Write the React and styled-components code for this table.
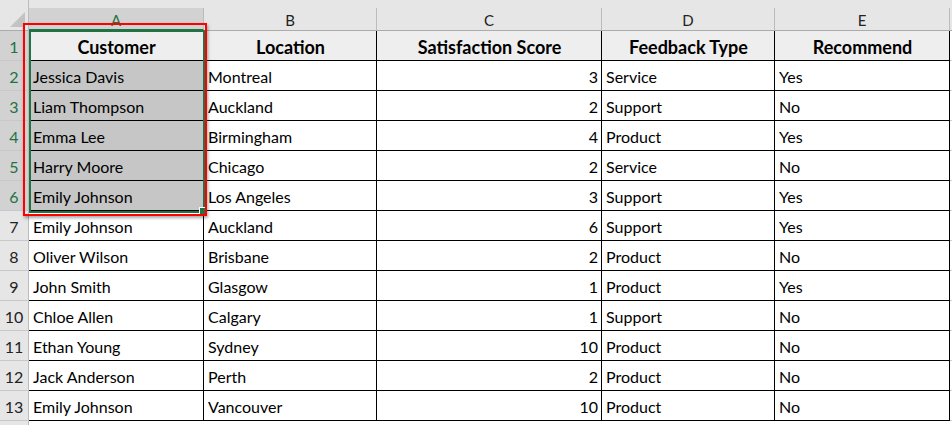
import React from "react"
import styled, { createGlobalStyle } from "styled-components"

const GlobalStyle = createGlobalStyle`
  html, body {
    margin: 0;
    padding: 0;
    background: #ffffff;
  }
  body {
    font-family: Lato, "Liberation Sans", sans-serif;
  }
`

const rows = [
  ["Jessica Davis", "Montreal", 3, "Service", "Yes"],
  ["Liam Thompson", "Auckland", 2, "Support", "No"],
  ["Emma Lee", "Birmingham", 4, "Product", "Yes"],
  ["Harry Moore", "Chicago", 2, "Service", "No"],
  ["Emily Johnson", "Los Angeles", 3, "Support", "Yes"],
  ["Emily Johnson", "Auckland", 6, "Support", "Yes"],
  ["Oliver Wilson", "Brisbane", 2, "Product", "No"],
  ["John Smith", "Glasgow", 1, "Product", "Yes"],
  ["Chloe Allen", "Calgary", 1, "Support", "No"],
  ["Ethan Young", "Sydney", 10, "Product", "No"],
  ["Jack Anderson", "Perth", 2, "Product", "No"],
  ["Emily Johnson", "Vancouver", 10, "Product", "No"],
]

const headers = ["Customer", "Location", "Satisfaction Score", "Feedback Type", "Recommend"]
const letters = ["A", "B", "C", "D", "E"]

const Sheet = styled.div`
  position: relative;
  width: 952px;
  height: 425px;
  overflow: hidden;
  background: #ffffff;
`

const TopStrip = styled.div`
  height: 8px;
  background: #e6e6e6;
`

const Grid = styled.div`
  display: grid;
  grid-template-columns: 29px 175px 173px 225px 173px 175px 2px;
  grid-auto-rows: 30px;
  grid-template-rows: 23px;
`

const Corner = styled.div`
  position: relative;
  background: #e6e6e6;
  border-right: 1px solid #bcbcbc;
  border-bottom: 1px solid #ababab;
  box-sizing: border-box;
  margin-top: -8px;
  height: 31px;
`

const Triangle = styled.div`
  position: absolute;
  right: 3px;
  bottom: 3px;
  width: 0;
  height: 0;
  border-left: 15px solid transparent;
  border-bottom: 15px solid #c3c3c3;
`

const ColHead = styled.div`
  display: flex;
  align-items: center;
  justify-content: center;
  box-sizing: border-box;
  background: ${(p) => (p.$sel ? "#d2d2d2" : "#e6e6e6")};
  color: ${(p) => (p.$sel ? "#217346" : "#222222")};
  border-right: 1px solid #bcbcbc;
  border-bottom: ${(p) => (p.$sel ? "2px solid #217346" : "1px solid #ababab")};
  font-size: 15px;
  padding-top: 2px;
`

const RowHead = styled.div`
  display: flex;
  align-items: center;
  justify-content: center;
  box-sizing: border-box;
  background: ${(p) => (p.$sel ? "#d2d2d2" : "#e6e6e6")};
  color: ${(p) => (p.$sel ? "#217346" : "#222222")};
  border-right: 1px solid #bcbcbc;
  border-bottom: 1px solid #c8c8c8;
  font-size: 16px;
  padding-top: 2px;
`

const Cell = styled.div`
  display: flex;
  align-items: center;
  justify-content: ${(p) => (p.$head ? "center" : p.$num ? "flex-end" : "flex-start")};
  box-sizing: border-box;
  padding: 2px 3px 0 4px;
  background: ${(p) => (p.$head ? "#eeeeee" : p.$sel ? "#c6c6c6" : "#ffffff")};
  border-right: 1px solid #000000;
  border-bottom: 1px solid #000000;
  font-size: ${(p) => (p.$head ? "18px" : "16px")};
  font-weight: ${(p) => (p.$head ? 700 : 400)};
  color: #000000;
  white-space: nowrap;
`

const Edge = styled.div`
  background: ${(p) => (p.$top ? "#e6e6e6" : "#ffffff")};
  border-bottom: 1px solid ${(p) => (p.$top ? "#ababab" : "#d4d4d4")};
  box-sizing: border-box;
`

const Selection = styled.div`
  position: absolute;
  left: 29px;
  top: 30px;
  width: 176px;
  height: 183px;
  box-sizing: border-box;
  border: 2px solid #217346;
  pointer-events: none;
`

const Handle = styled.div`
  position: absolute;
  right: -4px;
  bottom: -4px;
  width: 6px;
  height: 6px;
  background: #217346;
  border: 1px solid #ffffff;
`

const Highlight = styled.div`
  position: absolute;
  left: 23px;
  top: 23px;
  width: 184px;
  height: 193px;
  box-sizing: border-box;
  border: 2px solid #ff0000;
  box-shadow: 1px 2px 3px rgba(0, 0, 0, 0.35);
  pointer-events: none;
`

export default function App() {
  return (
    <>
      <GlobalStyle />
      <Sheet>
        <TopStrip />
        <Grid>
          <Corner>
            <Triangle />
          </Corner>
          {letters.map((l, i) => (
            <ColHead key={l} $sel={i === 0}>
              {l}
            </ColHead>
          ))}
          <Edge $top />

          <RowHead $sel>1</RowHead>
          {headers.map((h) => (
            <Cell key={h} $head>
              {h}
            </Cell>
          ))}
          <Edge />

          {rows.map((r, i) => {
            const sel = i < 5
            return (
              <React.Fragment key={i}>
                <RowHead $sel={sel}>{i + 2}</RowHead>
                <Cell $sel={sel}>{r[0]}</Cell>
                <Cell>{r[1]}</Cell>
                <Cell $num>{r[2]}</Cell>
                <Cell>{r[3]}</Cell>
                <Cell>{r[4]}</Cell>
                <Edge />
              </React.Fragment>
            )
          })}
          <RowHead />
        </Grid>
        <Selection>
          <Handle />
        </Selection>
        <Highlight />
      </Sheet>
    </>
  )
}
